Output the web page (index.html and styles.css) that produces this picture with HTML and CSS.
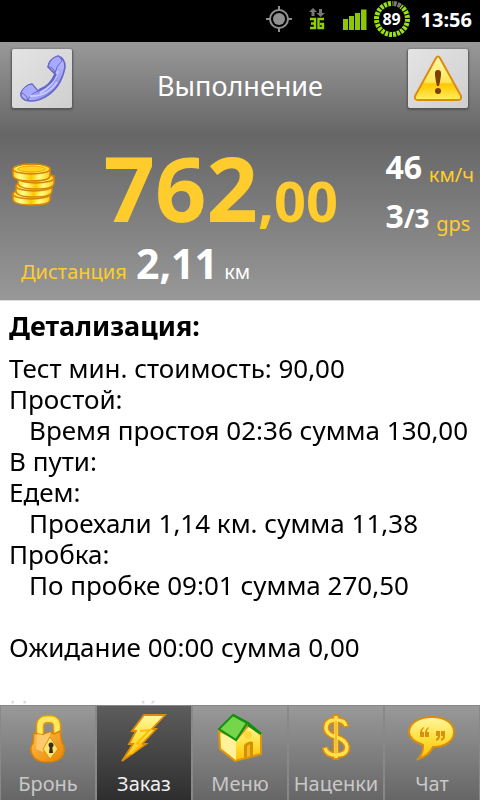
FILE: index.html
```html
<!DOCTYPE html>
<html lang="ru">
<head>
<meta charset="utf-8">
<meta name="viewport" content="width=device-width, initial-scale=1">
<title>Выполнение</title>
<link rel="stylesheet" href="styles.css">
</head>
<body>
<div class="statusbar">
  <svg width="28" height="28" viewBox="0 0 28 28"><g fill="none" stroke="#909090" stroke-width="2"><circle cx="14" cy="14" r="9"/><path d="M14 1v5M14 22v5M1 14h5M22 14h5"/></g><circle cx="14" cy="14" r="6" fill="#909090"/></svg>
  <svg class="net" width="16" height="24" viewBox="0 0 16 24"><path fill="#777" d="M4 1l4 4H5.500v4h-3V5H0zM11.500 10l-4-4H10V2h3v4h3z"/><path fill="none" stroke="#8fd000" stroke-width="2.400" d="M1 12h5v9H1M2 16.500h4M15 12H9.500v9H14v-4h-3"/></svg>
  <svg class="signal" width="26" height="24" viewBox="0 0 26 24"><path fill="#8cc800" d="M1 12h5v11H1zM7 9h5v14H7zM13 6h5v17h-5zM19 2.500h5.500V23H19z"/></svg>
  <div class="battery">
    <svg width="38" height="38" viewBox="0 0 38 38"><circle cx="19" cy="19" r="15.500" pathLength="96" fill="none" stroke="#9be010" stroke-width="5" stroke-dasharray="2.900 1.100"/><path d="M19.500 3.500A15.500 15.500 0 0 1 28 6.500" fill="none" stroke="#000" stroke-width="6"/><path d="M20.500 3.500A15.500 15.500 0 0 1 27.500 6" fill="none" stroke="#777" stroke-width="5" stroke-dasharray="3.200 1"/></svg>
    <span class="charge">89</span>
  </div>
  <time class="clock">13:56</time>
</div>

<header class="panel">
  <div class="titlebar">
    <button class="square" type="button" aria-label="Позвонить">
      <svg width="60" height="60" viewBox="0 0 60 60"><defs><linearGradient id="ph" x1="0" y1="1" x2="1" y2="0"><stop offset="0" stop-color="#b9bcff"/><stop offset=".45" stop-color="#8588ee"/><stop offset="1" stop-color="#c0c2ff"/></linearGradient></defs><g stroke="#6668c4" stroke-width="1.600" stroke-linejoin="round" fill="url(#ph)"><path d="M36 18Q37 10 46 7q7 2 7 11Q49 39 33 48 22 54 13 51 8 48 9 44q4-8 11-9l6 7Q38 37 43 25z"/><path d="M36 18q5-1 7 6 1-7 7-12-1-4-4-5Q38 9 36 18zM9 44q4 0 7 7 2-6 10-9l-6-7Q12 36 9 44z" fill="#a7aaff" stroke-width="1"/></g><path d="M28 44Q42 37 46 22M18 47Q35 48 45 33" fill="none" stroke="#c7c9ff" stroke-width="2"/><path d="M27 41Q40 36 44 25" fill="none" stroke="#6567c8" stroke-width="2"/></svg>
    </button>
    <h1 class="title">Выполнение</h1>
    <button class="square" type="button" aria-label="Тревога">
      <svg width="60" height="60" viewBox="0 0 60 60"><defs><linearGradient id="wa" x2="0" y2="1"><stop offset="0" stop-color="#fff6b0"/><stop offset=".58" stop-color="#ffe85a"/><stop offset=".64" stop-color="#ffc800"/><stop offset="1" stop-color="#fff060"/></linearGradient></defs><path d="M28 9q2-3 4 0l21 38q1 4-3 4H10q-4 0-3-4z" fill="url(#wa)" stroke="#dc8b0c" stroke-width="2"/><path d="M27 24q0-3 3-3t3 3q0 5-2 13h-2q-2-8-2-13z" fill="#7d3e00"/><circle cx="30" cy="42" r="3" fill="#7d3e00"/></svg>
    </button>
  </div>
  <div class="meter">
    <svg class="coins" width="44" height="44" viewBox="0 0 44 44"><defs><linearGradient id="co"><stop offset="0" stop-color="#ffd820"/><stop offset=".2" stop-color="#ffff90"/><stop offset=".5" stop-color="#ffc800"/><stop offset=".7" stop-color="#ffff80"/><stop offset="1" stop-color="#ffcf18"/></linearGradient></defs><g fill="url(#co)" stroke="#d98208" stroke-width="1.500"><path d="M1 30v7q2 5 19 5t18-5v-7z"/><ellipse cx="19.500" cy="31" rx="18.500" ry="5"/><path d="M4 23v6q2 5 18 5t18-5v-7z"/><ellipse cx="22" cy="23" rx="18" ry="5"/><path d="M6 14v7q2 5 18 5t18-5v-8z"/><ellipse cx="24" cy="15" rx="18" ry="5"/><path d="M1 6v7q2 5 19 5t18-5V6z"/><ellipse cx="19.500" cy="6" rx="18.500" ry="5"/></g><ellipse cx="19.500" cy="6" rx="14" ry="3" fill="#ffd21c" stroke="#f0a810"/></svg>
    <p class="price">762<span class="cents">,00</span></p>
    <div class="side">
      <p><b class="value">46</b> <span class="unit">км/ч</span></p>
      <p><b class="value">3<span class="total">/3</span></b> <span class="unit">gps</span></p>
    </div>
  </div>
  <p class="distance"><span class="unit">Дистанция</span> <b class="km">2,11</b> км</p>
</header>

<main class="details">
  <h2 class="heading">Детализация:</h2>
  <div class="lines">
    <p>Тест мин. стоимость: 90,00</p>
    <p>Простой:</p>
    <p class="sub">Время простоя 02:36 сумма 130,00</p>
    <p>В пути:</p>
    <p>Едем:</p>
    <p class="sub">Проехали 1,14 км. сумма 11,38</p>
    <p>Пробка:</p>
    <p class="sub">По пробке 09:01 сумма 270,50</p>
    <p class="gap">Ожидание 00:00 сумма 0,00</p>
    <p class="gap">Наценки : К</p>
  </div>
</main>

<nav class="tabs">
  <button class="tab" type="button">
    <svg width="48" height="52" viewBox="0 0 48 52"><defs><linearGradient id="go" x2="0" y2="1"><stop offset="0" stop-color="#fff7a0"/><stop offset=".5" stop-color="#ffe040"/><stop offset="1" stop-color="#ffc000"/></linearGradient><linearGradient id="or" x2="1" y2="1"><stop offset="0" stop-color="#ffc050"/><stop offset="1" stop-color="#e88400"/></linearGradient></defs><path d="M16 25V14q0-7 8.500-7t8.500 7v11" fill="none" stroke="#e39a08" stroke-width="8.500"/><path d="M16 25V14q0-7 8.500-7t8.500 7v11" fill="none" stroke="#ffe85c" stroke-width="5.500"/><path d="M10 21l8 2 8-3 4 2 6-3 2 12q3 3 2 8-1 10-15 11-13 1-17-8-3-6 1-11z" fill="url(#or)" stroke="#dc8200" stroke-width="1.500"/><path d="M13 22l6 1 8-3-8 20-7-3z" fill="#ffc96c"/><path d="M26 25l8 12-8 10-7-10z" fill="#ffe46a" stroke="#d89418"/><circle cx="27" cy="33" r="2.500" fill="#332c20"/><path d="M26 33h2l1 8h-4z" fill="#332c20"/></svg>
    <span>Бронь</span>
  </button>
  <button class="tab active" type="button" aria-current="page">
    <svg width="48" height="52" viewBox="0 0 48 52"><path d="M24 3h21L32 17h4L22 32h4L2 49 13 32H9l7-13h-4z" fill="url(#go)" stroke="#dc8a08" stroke-width="1.800"/><path d="M20 19l10-1-13 13 4 2-10 9" fill="none" stroke="#ffbd08" stroke-width="2"/></svg>
    <span>Заказ</span>
  </button>
  <button class="tab" type="button">
    <svg width="48" height="52" viewBox="0 0 48 52"><path d="M3 19l17 9L33 13l12 9v20L19 49 4 37z" fill="url(#go)" stroke="#df9410" stroke-width="2"/><path d="M20 28v20L5 36V21z" fill="#fff29a"/><path d="M28 46V33q5-5 9-3v14z" fill="#d59000"/><path d="M31 45V34l3-2v12z" fill="#edb824"/><circle cx="32" cy="23" r="4" fill="#ffd83c"/><path d="M17 3l14 8-11 17L3 17z" fill="#76d54a" stroke="#129010" stroke-width="2"/><path d="M17 3l15 8 13 11-13-9" fill="none" stroke="#129010" stroke-width="2.500"/></svg>
    <span>Меню</span>
  </button>
  <button class="tab" type="button">
    <svg width="48" height="52" viewBox="0 0 48 52"><g fill="none"><path d="M24 2v46M34 15q-1-7-10-7-10 0-10 8 0 6 10 9t11 10q0 8-11 8-10 0-11-8" stroke="#dc8b0c" stroke-width="6.500"/><path d="M24 4v42M34 14q-1-6-10-6-10 0-10 8 0 6 10 9t11 10q0 8-11 8-9 0-11-7" stroke="#ffe250" stroke-width="3.500"/><path d="M24 9v33" stroke="#e69d12" stroke-width="1"/></g></svg>
    <span>Наценки</span>
  </button>
  <button class="tab" type="button">
    <svg width="48" height="52" viewBox="0 0 48 52"><path d="M24 5c13 0 22 6 22 15s-9 15-21 15q-4 9-15 12 6-7 5-14C7 30 1 26 1 20 1 11 11 5 24 5z" fill="url(#go)" stroke="#d98c12" stroke-width="2"/><g fill="#d99010"><path d="M16 15q-4 2-4 6v4h4v-5h-2q0-3 2-4zM21 15q-4 2-4 6v4h4v-5h-2q0-3 2-4zM28 19h4v5q0 4-4 5v-2q2-1 2-3h-2zM33 19h4v5q0 4-4 5v-2q2-1 2-3h-2z"/></g></svg>
    <span>Чат</span>
  </button>
</nav>
</body>
</html>
```
FILE: styles.css
```css
* { box-sizing: border-box; margin: 0; padding: 0; }

body {
  display: flex;
  flex-direction: column;
  height: 100vh;
  overflow: hidden;
  background: #fff;
  color: #000;
  font-family: "Noto Sans", "Open Sans", sans-serif;
  font-size: 26px;
}

button { border: 0; font: inherit; color: inherit; cursor: pointer; }
svg { display: block; flex: none; }

.statusbar {
  display: flex;
  flex: none;
  align-items: center;
  justify-content: flex-end;
  height: 42px;
  padding: 0 8px 4px 0;
  background: #000;
  color: #fff;
}
.net { margin-left: 16px; }
.signal { margin-left: 17px; }
.battery {
  display: grid;
  place-items: center;
  margin: 0 10px 0 5px;
}
.battery > * { grid-area: 1 / 1; }
.charge { font-size: 16px; font-weight: 700; line-height: 20px; }
.clock { font-size: 20px; font-weight: 700; }

.panel {
  flex: none;
  background: linear-gradient(#999, #666 36%, #989898);
  border-bottom: 1px solid #ddd;
  color: #fff;
}
.titlebar {
  display: flex;
  align-items: flex-start;
  justify-content: space-between;
  padding: 7px 12px 0;
}
.square {
  width: 60px;
  height: 59px;
  background: linear-gradient(135deg, #e4e4e4, #cfcfcf);
  border-radius: 2px;
  box-shadow: 0 1px 2px 1px #555;
}
.title { font-size: 27px; font-weight: 400; line-height: 74px; }

.meter {
  display: flex;
  align-items: flex-start;
  padding: 16px 6px 0 12px;
}
.coins { margin-top: 24px; }
.price {
  flex: 1;
  color: #ffcc2e;
  font-size: 90px;
  font-weight: 700;
  line-height: 96px;
  text-align: center;
}
.cents { font-size: 56px; line-height: 1; }
.side { padding-top: 6px; white-space: nowrap; }
.side p { line-height: 49px; }
.side .unit { vertical-align: -3px; }
.value { font-size: 32px; line-height: 1; }
.total { font-size: 26px; }
.unit { color: #ffcc2e; font-size: 20px; line-height: 1; }
.distance {
  padding: 0 21px;
  font-size: 20px;
  line-height: 57px;
}
.km { margin: 0 1px 0 4px; font-size: 41px; line-height: 1; }

.details {
  flex: 1;
  min-height: 0;
  overflow: hidden;
  padding: 8px 9px 0;
  mask-image: linear-gradient(#000 calc(100% - 20px), transparent);
}
.heading { font-size: 27px; font-weight: 700; line-height: 34px; }
.lines { padding-top: 10px; line-height: 31px; white-space: nowrap; }
.sub { padding-left: 20px; }
.gap { margin-top: 31px; }

.tabs {
  display: grid;
  flex: none;
  grid-template-columns: repeat(5, 1fr);
  border-top: 1px solid #858a85;
}
.tab {
  display: flex;
  flex-direction: column;
  align-items: center;
  gap: 7px;
  padding: 6px 0 3px;
  background: linear-gradient(#999, #666);
  border-right: 1px solid #888;
  border-left: 1px solid #888;
  color: #c8c8c8;
  font-size: 20px;
  line-height: 26px;
}
.active { background: linear-gradient(#5d5d5d, #2e2e2e); color: #f0f0f0; }
```
